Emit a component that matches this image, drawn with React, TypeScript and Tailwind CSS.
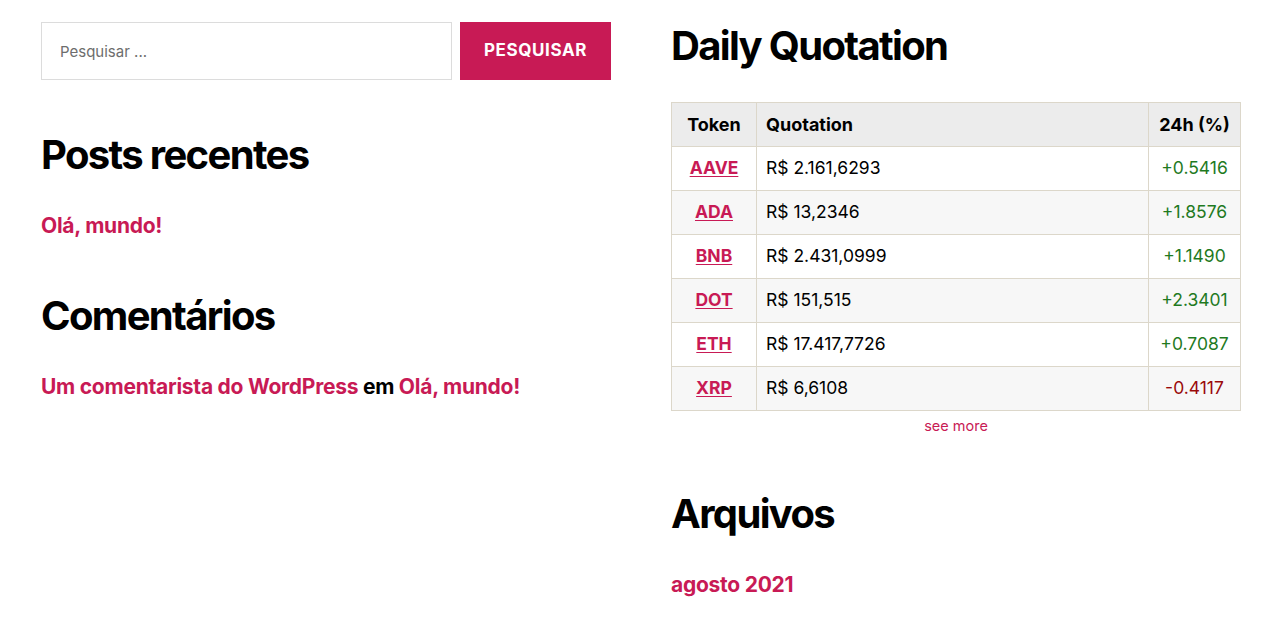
const ACCENT = '#c81a55';

type Quote = { token: string; price: string; change: string };

const quotes: Quote[] = [
  { token: 'AAVE', price: 'R$ 2.161,6293', change: '+0.5416' },
  { token: 'ADA', price: 'R$ 13,2346', change: '+1.8576' },
  { token: 'BNB', price: 'R$ 2.431,0999', change: '+1.1490' },
  { token: 'DOT', price: 'R$ 151,515', change: '+2.3401' },
  { token: 'ETH', price: 'R$ 17.417,7726', change: '+0.7087' },
  { token: 'XRP', price: 'R$ 6,6108', change: '-0.4117' },
];

function WidgetTitle({ children }: { children: React.ReactNode }) {
  return (
    <h2 className="text-[40px] leading-[40px] font-bold tracking-[-0.0415em] text-black">
      {children}
    </h2>
  );
}

function QuotationTable() {
  return (
    <div>
      <table className="w-full border-collapse text-[17.5px] text-black">
        <thead>
          <tr className="bg-[#ececec] h-[44px]">
            <th className="w-[85px] border border-[#dcd7ca] text-center text-[18px] font-bold">Token</th>
            <th className="border border-[#dcd7ca] pl-[9px] text-left text-[18px] font-bold">Quotation</th>
            <th className="w-[92px] border border-[#dcd7ca] text-center text-[18px] font-bold">24h (%)</th>
          </tr>
        </thead>
        <tbody>
          {quotes.map((q, i) => (
            <tr key={q.token} className={`h-[44px] ${i % 2 === 1 ? 'bg-[#f7f7f7]' : 'bg-white'}`}>
              <td className="border border-[#dcd7ca] text-center">
                <a href="#" className="font-bold underline underline-offset-2 text-[#c81a55]">
                  {q.token}
                </a>
              </td>
              <td className="border border-[#dcd7ca] pl-[9px]">{q.price}</td>
              <td
                className={`border border-[#dcd7ca] text-center ${
                  q.change.startsWith('-') ? 'text-[#9a0a0a]' : 'text-[#1f7a1f]'
                }`}
              >
                {q.change}
              </td>
            </tr>
          ))}
        </tbody>
      </table>
      <div className="mt-[6px] text-center text-[14.5px] leading-[18px]">
        <a href="#" className="text-[#c81a55]">see more</a>
      </div>
    </div>
  );
}

export default function App() {
  return (
    <div
      className="min-h-[617px] bg-white pl-[41px] pt-[22px]"
      style={{ fontFamily: 'Inter, "Noto Sans", sans-serif' }}
    >
      <div className="flex gap-[60px]">
        {/* left column */}
        <div className="w-[570px] flex flex-col">
          <form className="flex gap-[8px]" onSubmit={(e) => e.preventDefault()}>
            <input
              type="search"
              placeholder="Pesquisar ..."
              className="h-[58px] w-[411px] border border-[#dcdcdc] px-[18px] text-[15px] text-black placeholder:text-[#6d6d6d] outline-none"
            />
            <button
              type="submit"
              className="h-[58px] flex-1 text-[17px] font-bold uppercase tracking-[0.035em] text-white"
              style={{ backgroundColor: ACCENT }}
            >
              Pesquisar
            </button>
          </form>

          <div className="mt-[55px]">
            <WidgetTitle>Posts recentes</WidgetTitle>
            <ul className="mt-[36px]">
              <li className="text-[21px] leading-[30px] font-bold tracking-[-0.012em]">
                <a href="#" className="text-[#c81a55]">Olá, mundo!</a>
              </li>
            </ul>
          </div>

          <div className="mt-[55px]">
            <WidgetTitle>Comentários</WidgetTitle>
            <ul className="mt-[36px]">
              <li className="text-[21px] leading-[30px] font-bold tracking-[-0.012em] text-black">
                <a href="#" className="text-[#c81a55]">Um comentarista do WordPress</a> em{' '}
                <a href="#" className="text-[#c81a55]">Olá, mundo!</a>
              </li>
            </ul>
          </div>
        </div>

        {/* right column */}
        <div className="w-[570px] flex flex-col">
          <div className="mt-[4px]">
            <WidgetTitle>Daily Quotation</WidgetTitle>
            <div className="mt-[36px]">
              <QuotationTable />
            </div>
          </div>

          <div className="mt-[59px]">
            <WidgetTitle>Arquivos</WidgetTitle>
            <ul className="mt-[36px]">
              <li className="text-[21px] leading-[30px] font-bold tracking-[-0.012em]">
                <a href="#" className="text-[#c81a55]">agosto 2021</a>
              </li>
            </ul>
          </div>
        </div>
      </div>
    </div>
  );
}
